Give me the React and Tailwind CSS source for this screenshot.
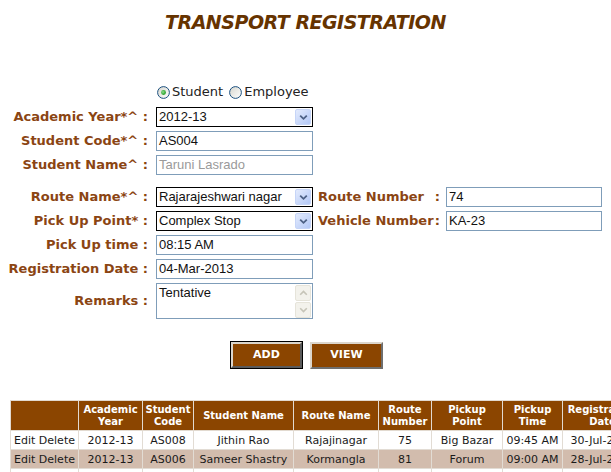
import React from "react";

function Radio({ checked, id }) {
  return (
    <svg width="13" height="13" viewBox="0 0 13 13" className="shrink-0">
      <defs>
        <linearGradient id={`rg${id}`} x1="0" y1="0" x2="1" y2="1">
          <stop offset="0" stopColor="#d6d6ce" />
          <stop offset="1" stopColor="#ffffff" />
        </linearGradient>
        <radialGradient id={`rd${id}`} cx="0.4" cy="0.4" r="0.6">
          <stop offset="0" stopColor="#8ee08e" />
          <stop offset="1" stopColor="#1e9a1e" />
        </radialGradient>
      </defs>
      <circle cx="6.5" cy="6.5" r="5.9" fill={`url(#rg${id})`} stroke="#1c5180" strokeWidth="1" />
      {checked && <circle cx="6.5" cy="6.5" r="2.4" fill={`url(#rd${id})`} />}
    </svg>
  );
}

function Label({ children }) {
  return (
    <div className="w-[148px] shrink-0 text-right font-bold text-[13px] leading-[20px] text-[#8b4513] whitespace-nowrap">
      {children}
    </div>
  );
}

function TextBox({ value, grey, w = "w-[157px]", ml = "ml-2" }) {
  return (
    <div
      className={`${ml} ${w} h-[20px] shrink-0 border border-[#7f9db9] bg-white flex items-center pl-[2px] font-['Liberation_Sans',Arial,sans-serif] text-[13px] leading-[16px] whitespace-nowrap overflow-hidden ${
        grey ? "text-[#9a9a9a]" : "text-[#111]"
      }`}
    >
      {value}
    </div>
  );
}

function SelectBox({ value }) {
  return (
    <div className="ml-2 w-[157px] h-[20px] shrink-0 border border-black bg-white flex items-center pl-[2px] font-['Liberation_Sans',Arial,sans-serif] text-[13px] leading-[16px] text-[#111]">
      <div className="flex-1 whitespace-nowrap overflow-hidden">{value}</div>
      <div className="w-[16px] h-[16px] mr-[1px] border border-[#c6d5f8] rounded-[2px] bg-[linear-gradient(135deg,#e3ebfd,#b3c8f6)] flex items-center justify-center">
        <svg width="9" height="7" viewBox="0 0 9 7">
          <path d="M1.2 1.6 L4.5 4.8 L7.8 1.6" fill="none" stroke="#4d6185" strokeWidth="1.8" />
        </svg>
      </div>
    </div>
  );
}

function RightLabel({ name }) {
  return (
    <div className="ml-[5px] w-[122px] shrink-0 flex justify-between font-bold text-[13px] leading-[20px] text-[#8b4513] whitespace-nowrap">
      <span>{name}</span>
      <span>:</span>
    </div>
  );
}

const cols = [68, 64, 51, 100, 85, 53, 71, 60, 80];
const headers = [
  [""],
  ["Academic", "Year"],
  ["Student", "Code"],
  ["Student Name"],
  ["Route Name"],
  ["Route", "Number"],
  ["Pickup", "Point"],
  ["Pickup", "Time"],
  ["Registration", "Date"],
];
const rows = [
  ["Edit Delete", "2012-13", "AS008", "Jithin Rao", "Rajajinagar", "75", "Big Bazar", "09:45 AM", "30-Jul-2013"],
  ["Edit Delete", "2012-13", "AS006", "Sameer Shastry", "Kormangla", "81", "Forum", "09:00 AM", "28-Jul-2013"],
  ["Edit Delete", "2012-13", "AS004", "Taruni Lasrado", "Rajarajeshwari", "74", "Complex Stop", "08:15 AM", "04-Mar-2013"],
];

export default function App() {
  return (
    <div className="w-[611px] h-[472px] overflow-hidden bg-white font-['DejaVu_Sans',Verdana,sans-serif]">
      {/* Title */}
      <div className="pt-[10px] h-[34px] text-center font-bold italic text-[19px] leading-[24px] tracking-[-0.5px] text-[#663300]">
        TRANSPORT REGISTRATION
      </div>

      {/* Radio row */}
      <div className="mt-[48px] h-[20px] flex items-center pl-[157px] text-[13px] text-[#222]">
        <Radio checked id="a" />
        <span className="ml-[2px]">Student</span>
        <span className="ml-[6px]">
          <Radio id="b" />
        </span>
        <span className="ml-[2px]">Employee</span>
      </div>

      {/* First group */}
      <div className="mt-[5px] flex flex-col gap-[4px]">
        <div className="flex items-center">
          <Label>Academic Year*^ :</Label>
          <SelectBox value="2012-13" />
        </div>
        <div className="flex items-center">
          <Label>Student Code*^ :</Label>
          <TextBox value="AS004" />
        </div>
        <div className="flex items-center">
          <Label>Student Name^ :</Label>
          <TextBox value="Taruni Lasrado" grey />
        </div>
      </div>

      {/* Second group */}
      <div className="mt-[12px] flex flex-col gap-[4px]">
        <div className="flex items-center">
          <Label>Route Name*^ :</Label>
          <SelectBox value="Rajarajeshwari nagar" />
          <RightLabel name="Route Number" />
          <TextBox value="74" ml="ml-[6px]" w="w-[156px]" />
        </div>
        <div className="flex items-center">
          <Label>Pick Up Point* :</Label>
          <SelectBox value="Complex Stop" />
          <RightLabel name="Vehicle Number" />
          <TextBox value="KA-23" ml="ml-[6px]" w="w-[156px]" />
        </div>
        <div className="flex items-center">
          <Label>Pick Up time :</Label>
          <TextBox value="08:15 AM" />
        </div>
        <div className="flex items-center">
          <Label>Registration Date :</Label>
          <TextBox value="04-Mar-2013" />
        </div>
        <div className="flex items-center">
          <Label>Remarks :</Label>
          <div className="ml-2 w-[157px] h-[36px] shrink-0 border border-[#7f9db9] bg-white flex">
            <div className="flex-1 pl-[2px] pt-[1px] font-['Liberation_Sans',Arial,sans-serif] text-[13px] leading-[16px] text-[#111]">
              Tentative
            </div>
            <div className="w-[16px] flex flex-col gap-[1px] pt-[1px] mr-[1px]">
              <div className="h-[16px] border border-[#e6e4da] rounded-[2px] bg-[#f3f2ec] flex items-center justify-center">
                <svg width="9" height="6" viewBox="0 0 9 6">
                  <path d="M1.2 4.8 L4.5 1.5 L7.8 4.8" fill="none" stroke="#c6c4b8" strokeWidth="1.6" />
                </svg>
              </div>
              <div className="h-[16px] border border-[#e6e4da] rounded-[2px] bg-[#f3f2ec] flex items-center justify-center">
                <svg width="9" height="6" viewBox="0 0 9 6">
                  <path d="M1.2 1.2 L4.5 4.5 L7.8 1.2" fill="none" stroke="#c6c4b8" strokeWidth="1.6" />
                </svg>
              </div>
            </div>
          </div>
        </div>
      </div>

      {/* Buttons */}
      <div className="mt-[22px] flex items-start pl-[230px] gap-[7px]">
        <div className="border border-black">
          <div className="w-[71px] h-[26px] bg-[#8b4500] border-2 border-t-[#dcd6cc] border-l-[#dcd6cc] border-b-[#5a5a5a] border-r-[#5a5a5a] flex items-center justify-center text-white font-bold text-[11px]">
            ADD
          </div>
        </div>
        <div className="mt-[1px] w-[73px] h-[27px] bg-[#8b4500] border-2 border-t-[#dcd6cc] border-l-[#dcd6cc] border-b-[#6e6e6e] border-r-[#6e6e6e] flex items-center justify-center text-white font-bold text-[11px]">
          VIEW
        </div>
      </div>

      {/* Table */}
      <div className="mt-[31px] pl-[10px]">
        <table className="border-collapse table-fixed w-[632px]">
          <colgroup>
            {cols.map((w, i) => (
              <col key={i} style={{ width: w }} />
            ))}
          </colgroup>
          <thead>
            <tr className="h-[30px] bg-[#8b4500]">
              {headers.map((h, i) => (
                <th
                  key={i}
                  className="border border-[#e2dad0] p-0 text-center font-bold text-[10px] leading-[12px] text-white whitespace-nowrap overflow-hidden"
                >
                  {h.map((line, j) => (
                    <div key={j}>{line}</div>
                  ))}
                </th>
              ))}
            </tr>
          </thead>
          <tbody>
            {rows.map((r, i) => (
              <tr key={i} className={`h-[19px] ${i === 1 ? "bg-[#d2bcad]" : "bg-white"}`}>
                {r.map((c, j) => (
                  <td
                    key={j}
                    className="border border-[#e2dcd4] p-0 text-center text-[11px] leading-[17px] text-[#1a1a1a] whitespace-nowrap overflow-hidden"
                  >
                    {c}
                  </td>
                ))}
              </tr>
            ))}
          </tbody>
        </table>
      </div>
    </div>
  );
}
